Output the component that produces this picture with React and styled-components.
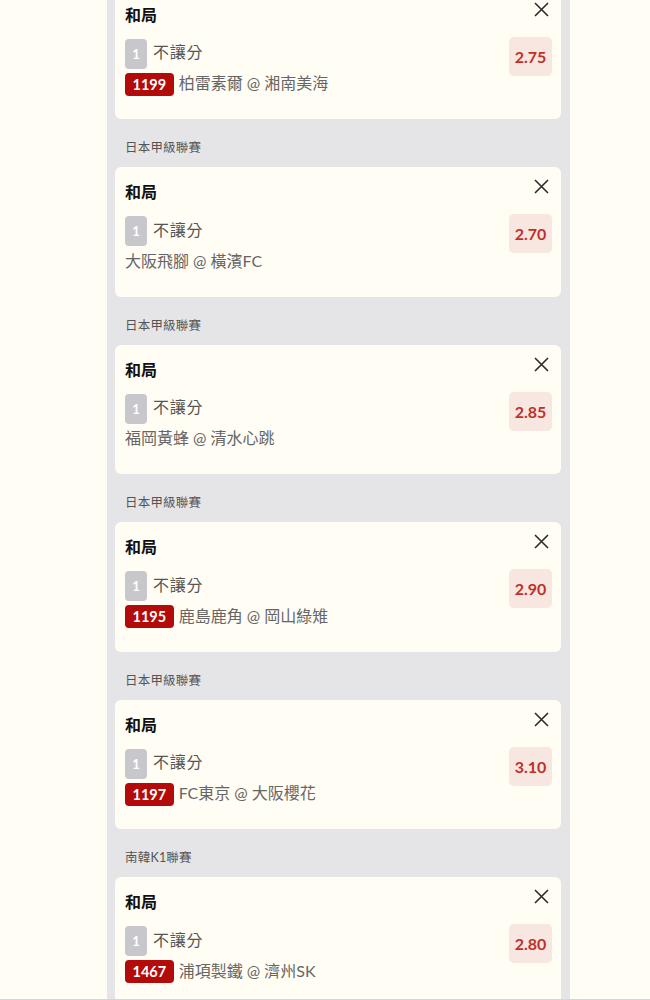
import React from "react";
import styled, { createGlobalStyle } from "styled-components";

const bets = [
  { id: 1, league: null, odds: "2.75", code: "1199", match: "柏雷素爾 @ 湘南美海" },
  { id: 2, league: "日本甲級聯賽", odds: "2.70", code: null, match: "大阪飛腳 @ 橫濱FC" },
  { id: 3, league: "日本甲級聯賽", odds: "2.85", code: null, match: "福岡黃蜂 @ 清水心跳" },
  { id: 4, league: "日本甲級聯賽", odds: "2.90", code: "1195", match: "鹿島鹿角 @ 岡山綠雉" },
  { id: 5, league: "日本甲級聯賽", odds: "3.10", code: "1197", match: "FC東京 @ 大阪櫻花" },
  { id: 6, league: "南韓K1聯賽", odds: "2.80", code: "1467", match: "浦項製鐵 @ 濟州SK" },
];

const CloseIcon = () => (
  <svg width="15" height="15" viewBox="0 0 15 15">
    <path d="M1 1L14 14M14 1L1 14" stroke="#2b2b2b" strokeWidth="1.6" fill="none" />
  </svg>
);

const BetCard = ({ odds, code, match }) => {
  return (
    <Card>
      <Info>
        <Title>和局</Title>
        <HandicapRow>
          <LineBadge>1</LineBadge>
          <Handicap>不讓分</Handicap>
        </HandicapRow>
        <MatchRow>
          {code && <CodeBadge>{code}</CodeBadge>}
          <Match>{match}</Match>
        </MatchRow>
      </Info>
      <Side>
        <CloseButton>
          <CloseIcon />
        </CloseButton>
        <Odds>{odds}</Odds>
      </Side>
    </Card>
  );
};

const App = () => {
  return (
    <>
      <GlobalStyle />
      <Page>
        <Column>
          <List>
            {bets.map((bet) => (
              <Group key={bet.id}>
                {bet.league && <League>{bet.league}</League>}
                <BetCard {...bet} />
              </Group>
            ))}
          </List>
        </Column>
      </Page>
    </>
  );
};

export default App;

const GlobalStyle = createGlobalStyle`
  * { box-sizing: border-box; }
  body {
    margin: 0;
    background: #fffdf4;
    font-family: Lato, "Noto Sans CJK TC", sans-serif;
  }
`;

const Page = styled.div`
  height: 1000px;
  overflow: hidden;
  border-bottom: 1px solid #d6d6d6;
`;

const Column = styled.div`
  width: 463px;
  height: 100%;
  margin-left: 107px;
  background: #e5e5e8;
  padding: 0 9px 0 8px;
  overflow: hidden;
`;

const List = styled.div`
  margin-top: -10.5px;
`;

const Group = styled.div``;

const League = styled.div`
  padding: 20px 0 10px 10px;
  font-size: 12.5px;
  line-height: 18px;
  color: #555;
  letter-spacing: 0.2px;
`;

const Card = styled.div`
  display: flex;
  background: #fffdf4;
  border-radius: 6px;
`;

const Info = styled.div`
  flex: 1;
  padding: 14px 10px 23.5px 10px;
`;

const Title = styled.div`
  font-size: 16px;
  line-height: 22px;
  font-weight: 700;
  color: #111;
`;

const HandicapRow = styled.div`
  display: flex;
  align-items: center;
  gap: 6px;
  margin-top: 13px;
`;

const LineBadge = styled.span`
  display: flex;
  align-items: center;
  justify-content: center;
  width: 22px;
  height: 30px;
  border-radius: 4px;
  background: #c8c8cc;
  color: #fff;
  font-size: 13px;
  font-weight: 700;
`;

const Handicap = styled.span`
  font-size: 16px;
  line-height: 20px;
  padding-bottom: 3px;
  letter-spacing: 0.8px;
  color: #555;
`;

const MatchRow = styled.div`
  display: flex;
  align-items: center;
  gap: 5px;
  height: 23px;
  margin-top: 4px;
`;

const CodeBadge = styled.span`
  display: flex;
  align-items: center;
  justify-content: center;
  height: 23px;
  padding: 0 7.5px;
  border-radius: 4px;
  background: #b30a0a;
  color: #fff;
  font-size: 14.5px;
  font-weight: 700;
`;

const Match = styled.span`
  font-size: 16px;
  line-height: 20px;
  padding-bottom: 2px;
  color: #666;
`;

const Side = styled.div`
  display: flex;
  flex-direction: column;
  align-items: flex-end;
  padding: 12px 9px 0 0;
`;

const CloseButton = styled.div`
  width: 15px;
  height: 15px;
  margin-right: 3px;
  display: flex;
`;

const Odds = styled.div`
  margin-top: 20px;
  display: flex;
  align-items: center;
  justify-content: center;
  width: 43px;
  height: 39px;
  border-radius: 5px;
  background: #f8e6e0;
  color: #c0302a;
  font-size: 16px;
  font-weight: 700;
`;
